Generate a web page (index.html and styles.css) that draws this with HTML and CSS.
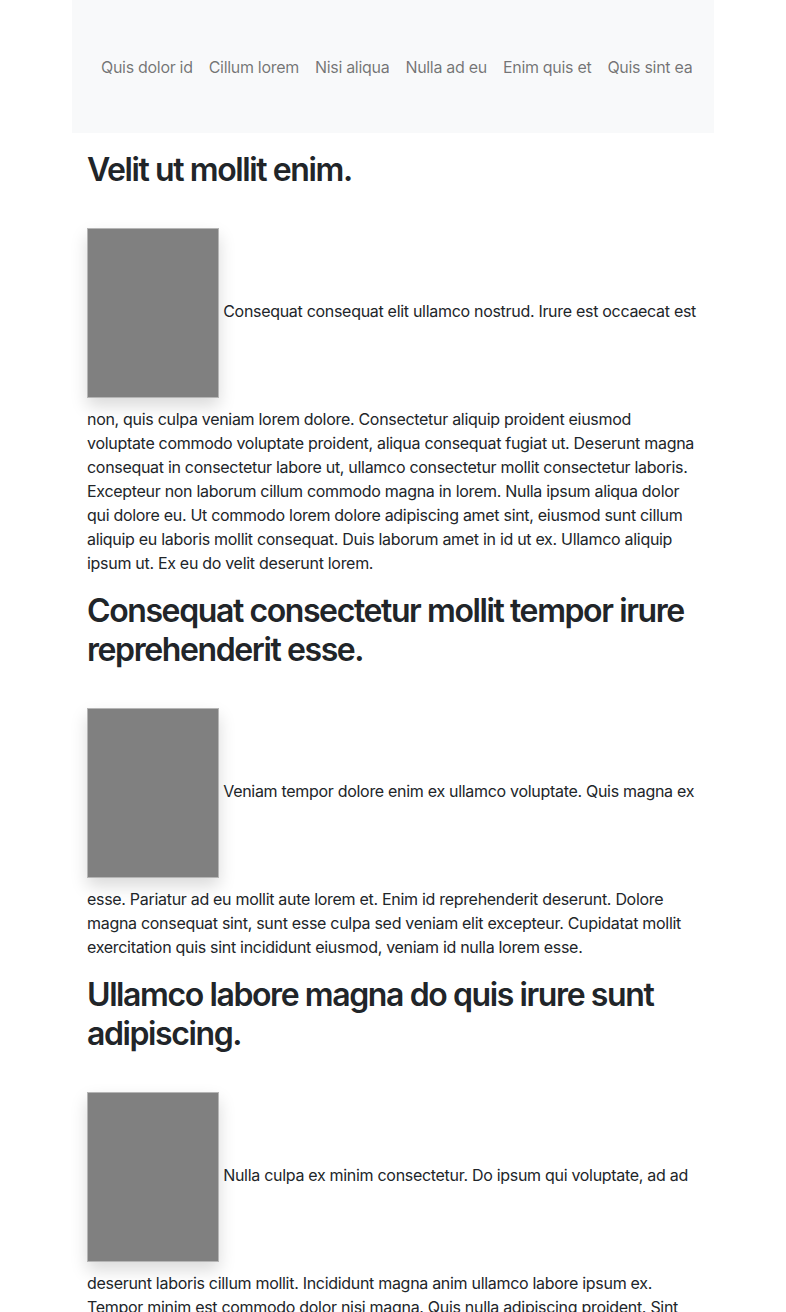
FILE: index.html
```html
<!DOCTYPE html>
<html lang="en">
<head>
<meta charset="utf-8">
<title>Page</title>
<link rel="stylesheet" href="styles.css">
</head>
<body>
<div class="container">
  <nav class="nav">
    <a class="nav-link" href="#">Quis dolor id</a>
    <a class="nav-link" href="#">Cillum lorem</a>
    <a class="nav-link" href="#">Nisi aliqua</a>
    <a class="nav-link" href="#">Nulla ad eu</a>
    <a class="nav-link" href="#">Enim quis et</a>
    <a class="nav-link" href="#">Quis sint ea</a>
  </nav>
  <main class="content">
    <section class="post">
      <h2 class="post-title">Velit ut mollit enim.</h2>
      <p class="post-body"><span class="thumb"></span> Consequat consequat elit ullamco nostrud. Irure est occaecat est non, quis culpa veniam lorem dolore. Consectetur aliquip proident eiusmod voluptate commodo voluptate proident, aliqua consequat fugiat ut. Deserunt magna consequat in consectetur labore ut, ullamco consectetur mollit consectetur laboris. Excepteur non laborum cillum commodo magna in lorem. Nulla ipsum aliqua dolor qui dolore eu. Ut commodo lorem dolore adipiscing amet sint, eiusmod sunt cillum aliquip eu laboris mollit consequat. Duis laborum amet in id ut ex. Ullamco aliquip ipsum ut. Ex eu do velit deserunt lorem.</p>
    </section>
    <section class="post">
      <h2 class="post-title">Consequat consectetur mollit tempor irure reprehenderit esse.</h2>
      <p class="post-body"><span class="thumb"></span> Veniam tempor dolore enim ex ullamco voluptate. Quis magna ex esse. Pariatur ad eu mollit aute lorem et. Enim id reprehenderit deserunt. Dolore magna consequat sint, sunt esse culpa sed veniam elit excepteur. Cupidatat mollit exercitation quis sint incididunt eiusmod, veniam id nulla lorem esse.</p>
    </section>
    <section class="post">
      <h2 class="post-title">Ullamco labore magna do quis irure sunt adipiscing.</h2>
      <p class="post-body"><span class="thumb"></span> Nulla culpa ex minim consectetur. Do ipsum qui voluptate, ad ad deserunt laboris cillum mollit. Incididunt magna anim ullamco labore ipsum ex. Tempor minim est commodo dolor nisi magna. Quis nulla adipiscing proident. Sint dolore aute eiusmod nulla, magna cillum culpa consequat. Labore ut elit dolore.</p>
    </section>
  </main>
</div>
</body>
</html>
```

FILE: styles.css
```css
* { box-sizing: border-box; }
html, body { margin: 0; padding: 0; }
body {
  font-family: Inter, "Noto Sans", "Liberation Sans", sans-serif;
  font-size: 16px;
  line-height: 24px;
  letter-spacing: -0.3px;
  color: #212529;
  background: #fff;
}
.container {
  width: 642px;
  margin: 0 auto;
}
.nav {
  background: #f8f9fa;
  height: 133px;
  display: flex;
  align-items: center;
  justify-content: flex-start;
  padding: 0 0 0 21px;
}
.nav-link {
  color: rgba(0, 0, 0, 0.55);
  text-decoration: none;
  padding: 0 8px;
  white-space: nowrap;
}
.content {
  padding: 17px 15px 0;
}
.post-title {
  font-size: 32px;
  font-weight: 600;
  line-height: 39px;
  letter-spacing: -1.4px;
  margin: 0 0 39px;
}
.post-body {
  margin: 0 0 16px;
}
.thumb {
  display: inline-block;
  vertical-align: -90px;
  width: 132px;
  height: 170px;
  background: #808080;
  border: 1px solid #b5b5b5;
  box-shadow: 0 8px 16px rgba(0, 0, 0, 0.15);
  margin-bottom: 9px;
}
```
